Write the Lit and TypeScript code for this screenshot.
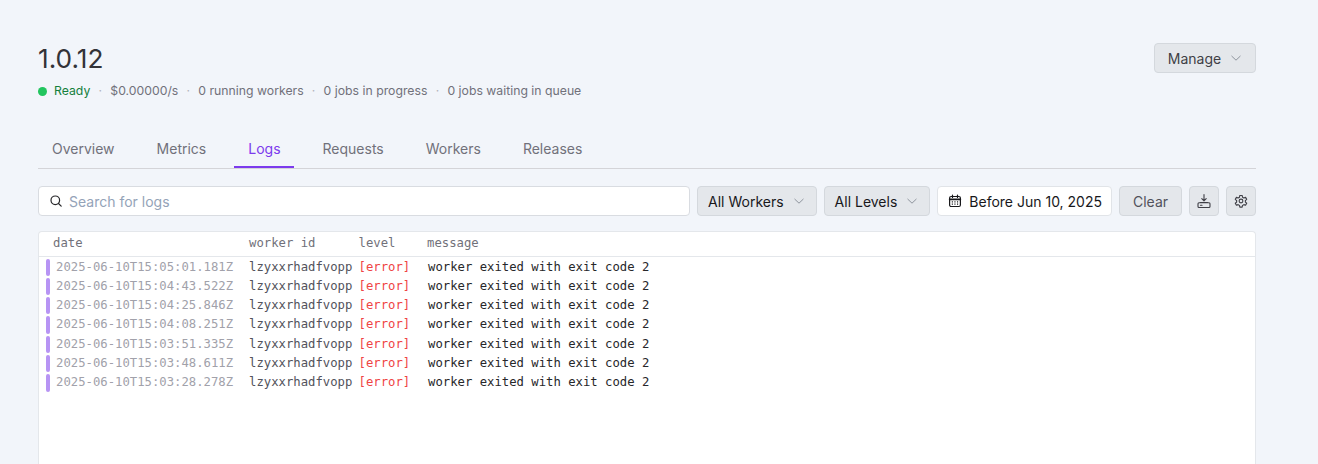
import { LitElement, html, css } from "lit";
import { customElement } from "lit/decorators.js";

const chevron = html`<svg class="chev" width="12" height="12" viewBox="0 0 12 12" fill="none"><path d="M1.8 4.2L6 8.2l4.2-4" stroke="currentColor" stroke-width="1" stroke-linecap="round" stroke-linejoin="round"/></svg>`;

const rows = [
  "2025-06-10T15:05:01.181Z",
  "2025-06-10T15:04:43.522Z",
  "2025-06-10T15:04:25.846Z",
  "2025-06-10T15:04:08.251Z",
  "2025-06-10T15:03:51.335Z",
  "2025-06-10T15:03:48.611Z",
  "2025-06-10T15:03:28.278Z",
];

const tabs = ["Overview", "Metrics", "Logs", "Requests", "Workers", "Releases"];
const stats = ["$0.00000/s", "0 running workers", "0 jobs in progress", "0 jobs waiting in queue"];

@customElement("app-root")
export class AppRoot extends LitElement {
  static styles = css`
    :host {
      display: block;
      height: 464px;
      overflow: hidden;
      background: #f2f5fa;
      font-family: Inter, "Liberation Sans", sans-serif;
      box-sizing: border-box;
      padding: 0 62px 0 38px;
    }
    .head {
      display: flex;
      justify-content: space-between;
      align-items: flex-start;
      padding-top: 43px;
      height: 133px;
      box-sizing: border-box;
    }
    h1 {
      margin: 0;
      font-size: 26.25px;
      font-weight: 400;
      line-height: 32px;
      color: #333338;
    }
    .status {
      display: flex;
      align-items: center;
      margin-top: 8px;
      font-size: 12.25px;
      line-height: 16px;
      color: #71717a;
    }
    .dot {
      width: 9px;
      height: 9px;
      border-radius: 50%;
      background: #22c55e;
      margin-right: 7px;
    }
    .ready { color: #15803d; }
    .sep { width: 20px; text-align: center; color: #b4b4bb; }
    .btn {
      display: inline-flex;
      align-items: center;
      justify-content: center;
      box-sizing: border-box;
      height: 30px;
      border: 1px solid #d4d8dd;
      border-radius: 4px;
      background: #e4e7eb;
      color: #27272a;
      font-size: 14px;
    }
    .manage { width: 102px; gap: 9px; color: #3f3f46; }
    .chev { color: #8f959e; flex: none; }
    .tabs {
      display: flex;
      border-bottom: 1px solid #d4d4d8;
      height: 36px;
      box-sizing: border-box;
    }
    .tab {
      padding: 0 13.5px 0 14px;
      margin-right: 14.5px;
      font-size: 14px;
      line-height: 32px;
      color: #71717a;
      height: 35px;
      box-sizing: border-box;
    }
    .tab.on {
      color: #7c3aed;
      border-bottom: 2px solid #7c3aed;
    }
    .tools {
      display: flex;
      gap: 7px;
      margin-top: 17px;
      height: 30px;
    }
    .search {
      flex: 1;
      display: flex;
      align-items: center;
      gap: 6px;
      padding-left: 10px;
      background: #fff;
      border: 1px solid #d9dce1;
      border-radius: 4px;
      font-size: 14px;
      color: #94a3b8;
    }
    .search svg { color: #27272a; }
    .sel { gap: 9px; padding: 0 11px 0 10px; color: #18181b; }
    .date {
      background: #fff;
      border-color: #e1e4e8;
      gap: 7px;
      padding: 0 9px 0 10px;
      color: #18181b;
    }
    .clear { width: 63px; color: #52525b; }
    .icon { width: 30px; color: #3f3f46; }
    .card {
      margin-top: 15px;
      background: #fff;
      border: 1px solid #e4e7eb;
      border-bottom: 0;
      border-radius: 4px 4px 0 0;
      height: 240px;
      font-family: "DejaVu Sans Mono", monospace;
      font-size: 12.25px;
    }
    .th, .row { display: grid; }
    .th {
      height: 24px;
      line-height: 22px;
      padding-left: 14px;
      color: #71717a;
      border-bottom: 1px solid #e4e7eb;
      grid-template-columns: 196px 109.5px 68.5px 1fr;
    }
    .rows { padding-top: 0.5px; }
    .row {
      position: relative;
      height: 19.33px;
      line-height: 19.33px;
      padding-left: 17px;
      grid-template-columns: 193px 109.5px 69.5px 1fr;
      white-space: pre;
    }
    .bar {
      position: absolute;
      left: 7px;
      top: 1px;
      bottom: 1px;
      width: 4px;
      border-radius: 2px;
      background: #b794f4;
    }
    .d { color: #a1a1aa; }
    .w { color: #52525b; }
    .l { color: #ef4444; }
    .m { color: #27272a; }
  `;

  render() {
    return html`
      <div class="head">
        <div>
          <h1>1.0.12</h1>
          <div class="status">
            <span class="dot"></span><span class="ready">Ready</span>
            ${stats.map((s) => html`<span class="sep">·</span><span>${s}</span>`)}
          </div>
        </div>
        <div class="btn manage">Manage ${chevron}</div>
      </div>
      <div class="tabs">
        ${tabs.map((t) => html`<div class="tab ${t === "Logs" ? "on" : ""}">${t}</div>`)}
      </div>
      <div class="tools">
        <div class="search">
          <svg width="14" height="14" viewBox="0 0 14 14" fill="none" stroke="currentColor" stroke-width="1.2" stroke-linecap="round"><circle cx="6.3" cy="6.3" r="4.3"/><path d="M9.5 9.5l2.7 2.7"/></svg>
          Search for logs
        </div>
        <div class="btn sel">All Workers ${chevron}</div>
        <div class="btn sel">All Levels ${chevron}</div>
        <div class="btn date">
          <svg width="14" height="14" viewBox="0 0 14 14" fill="none" stroke="currentColor" stroke-width="1.2" stroke-linecap="round"><rect x="1.6" y="2.5" width="10.8" height="10" rx="1.5"/><path d="M1.6 5.4h10.8" stroke-width="1.6"/><path d="M4.5 1v2.4M9.5 1v2.4"/><path d="M3.8 7.8h1.1M6.4 7.8h1.1M9 7.8h1.1M3.8 10.2h1.1M6.4 10.2h1.1M9 10.2h1.1" stroke-width="1.2" stroke-linecap="butt"/></svg>
          Before Jun 10, 2025
        </div>
        <div class="btn clear">Clear</div>
        <div class="btn icon">
          <svg width="16" height="16" viewBox="0 0 16 16" fill="none" stroke="currentColor" stroke-width="1.1" stroke-linecap="round" stroke-linejoin="round"><path d="M8 1.5v6M5.8 5.6L8 7.8l2.2-2.2M4.5 9.5h7"/><rect x="2" y="9.8" width="12" height="4.7" rx="1"/><path d="M4.5 12.2h1.5"/></svg>
        </div>
        <div class="btn icon">
          <svg width="14" height="14" viewBox="0 0 24 24" fill="none" stroke="currentColor" stroke-width="1.9" stroke-linecap="round" stroke-linejoin="round"><path d="M10 2.5h4l.6 3 2.3 1.3 2.9-1 2 3.4-2.3 2v2.6l2.3 2-2 3.4-2.9-1-2.3 1.3-.6 3h-4l-.6-3-2.3-1.3-2.9 1-2-3.4 2.3-2v-2.6l-2.3-2 2-3.4 2.9 1 2.3-1.3z"/><circle cx="12" cy="12" r="3.2"/></svg>
        </div>
      </div>
      <div class="card">
        <div class="th"><span>date</span><span>worker id</span><span>level</span><span>message</span></div>
        <div class="rows">
          ${rows.map(
            (d) => html`<div class="row">
              <span class="bar"></span>
              <span class="d">${d}</span><span class="w">lzyxxrhadfvopp</span><span class="l">[error]</span><span class="m">worker exited with exit code 2</span>
            </div>`
          )}
        </div>
      </div>
    `;
  }
}
